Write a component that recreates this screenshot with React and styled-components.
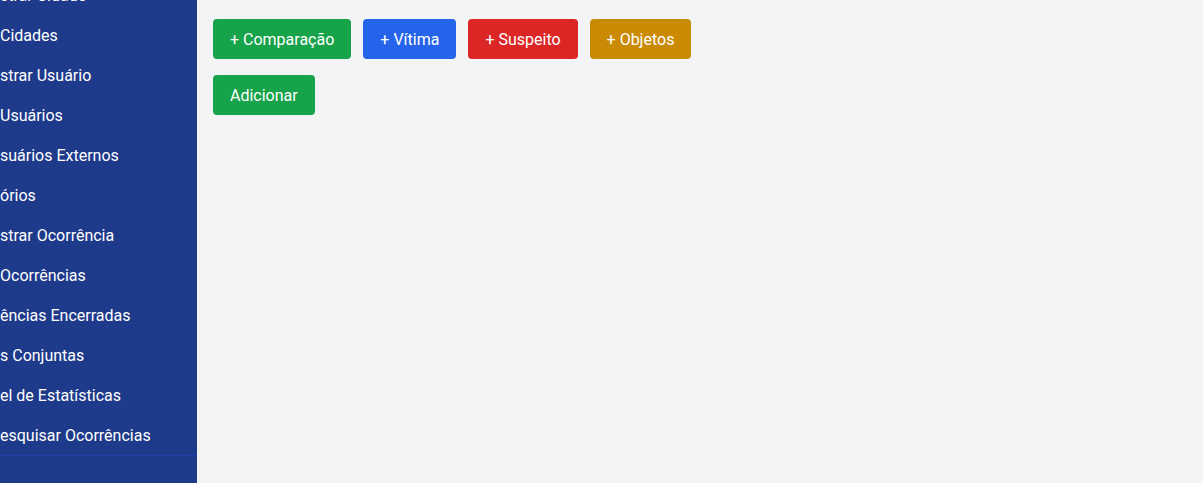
import React from "react";
import styled, { createGlobalStyle } from "styled-components";

const Global = createGlobalStyle`
  html, body { margin: 0; padding: 0; height: 100%; }
  body {
    font-family: Roboto, "Liberation Sans", sans-serif;
    background: #f3f4f6;
    overflow: hidden;
  }
  #root { height: 100%; }
  * { box-sizing: border-box; }
`;

const Layout = styled.div`
  display: flex;
  height: 483px;
  overflow: hidden;
`;

const Sidebar = styled.aside`
  width: 197px;
  flex-shrink: 0;
  background: #1e3a8a;
  color: #fff;
  overflow: hidden;
  display: flex;
  flex-direction: column;
`;

const Nav = styled.nav`
  display: flex;
  flex-direction: column;
  margin-top: -25px;
  border-bottom: 1px solid #1e40af;
`;

const NavItem = styled.a`
  display: block;
  white-space: nowrap;
  padding: 9px 0 7px;
  font-size: 16px;
  line-height: 24px;
  color: #fff;
  text-decoration: none;
`;

const Main = styled.main`
  flex: 1;
  padding: 19px 16px 16px 16px;
  display: flex;
  flex-direction: column;
  gap: 16px;
  align-items: flex-start;
`;

const ButtonRow = styled.div`
  display: flex;
  gap: 12px;
`;

const colors = {
  green: "#16a34a",
  blue: "#2563eb",
  red: "#dc2626",
  yellow: "#ca8a04",
};

const Button = styled.button`
  border: none;
  border-radius: 4px;
  background: ${(p) => colors[p.$color]};
  color: #fff;
  font-family: inherit;
  font-size: 16px;
  line-height: 24px;
  padding: 9px 17px 7px;
  cursor: pointer;
`;

const items = [
  "strar Cidade",
  "Cidades",
  "strar Usuário",
  "Usuários",
  "suários Externos",
  "órios",
  "strar Ocorrência",
  "Ocorrências",
  "ências Encerradas",
  "s Conjuntas",
  "el de Estatísticas",
  "esquisar Ocorrências",
];

export default function App() {
  return (
    <>
      <Global />
      <Layout>
        <Sidebar>
          <Nav>
            {items.map((t) => (
              <NavItem key={t} href="#">
                {t}
              </NavItem>
            ))}
          </Nav>
        </Sidebar>
        <Main>
          <ButtonRow>
            <Button $color="green">+ Comparação</Button>
            <Button $color="blue">+ Vítima</Button>
            <Button $color="red">+ Suspeito</Button>
            <Button $color="yellow">+ Objetos</Button>
          </ButtonRow>
          <Button $color="green">Adicionar</Button>
        </Main>
      </Layout>
    </>
  );
}
